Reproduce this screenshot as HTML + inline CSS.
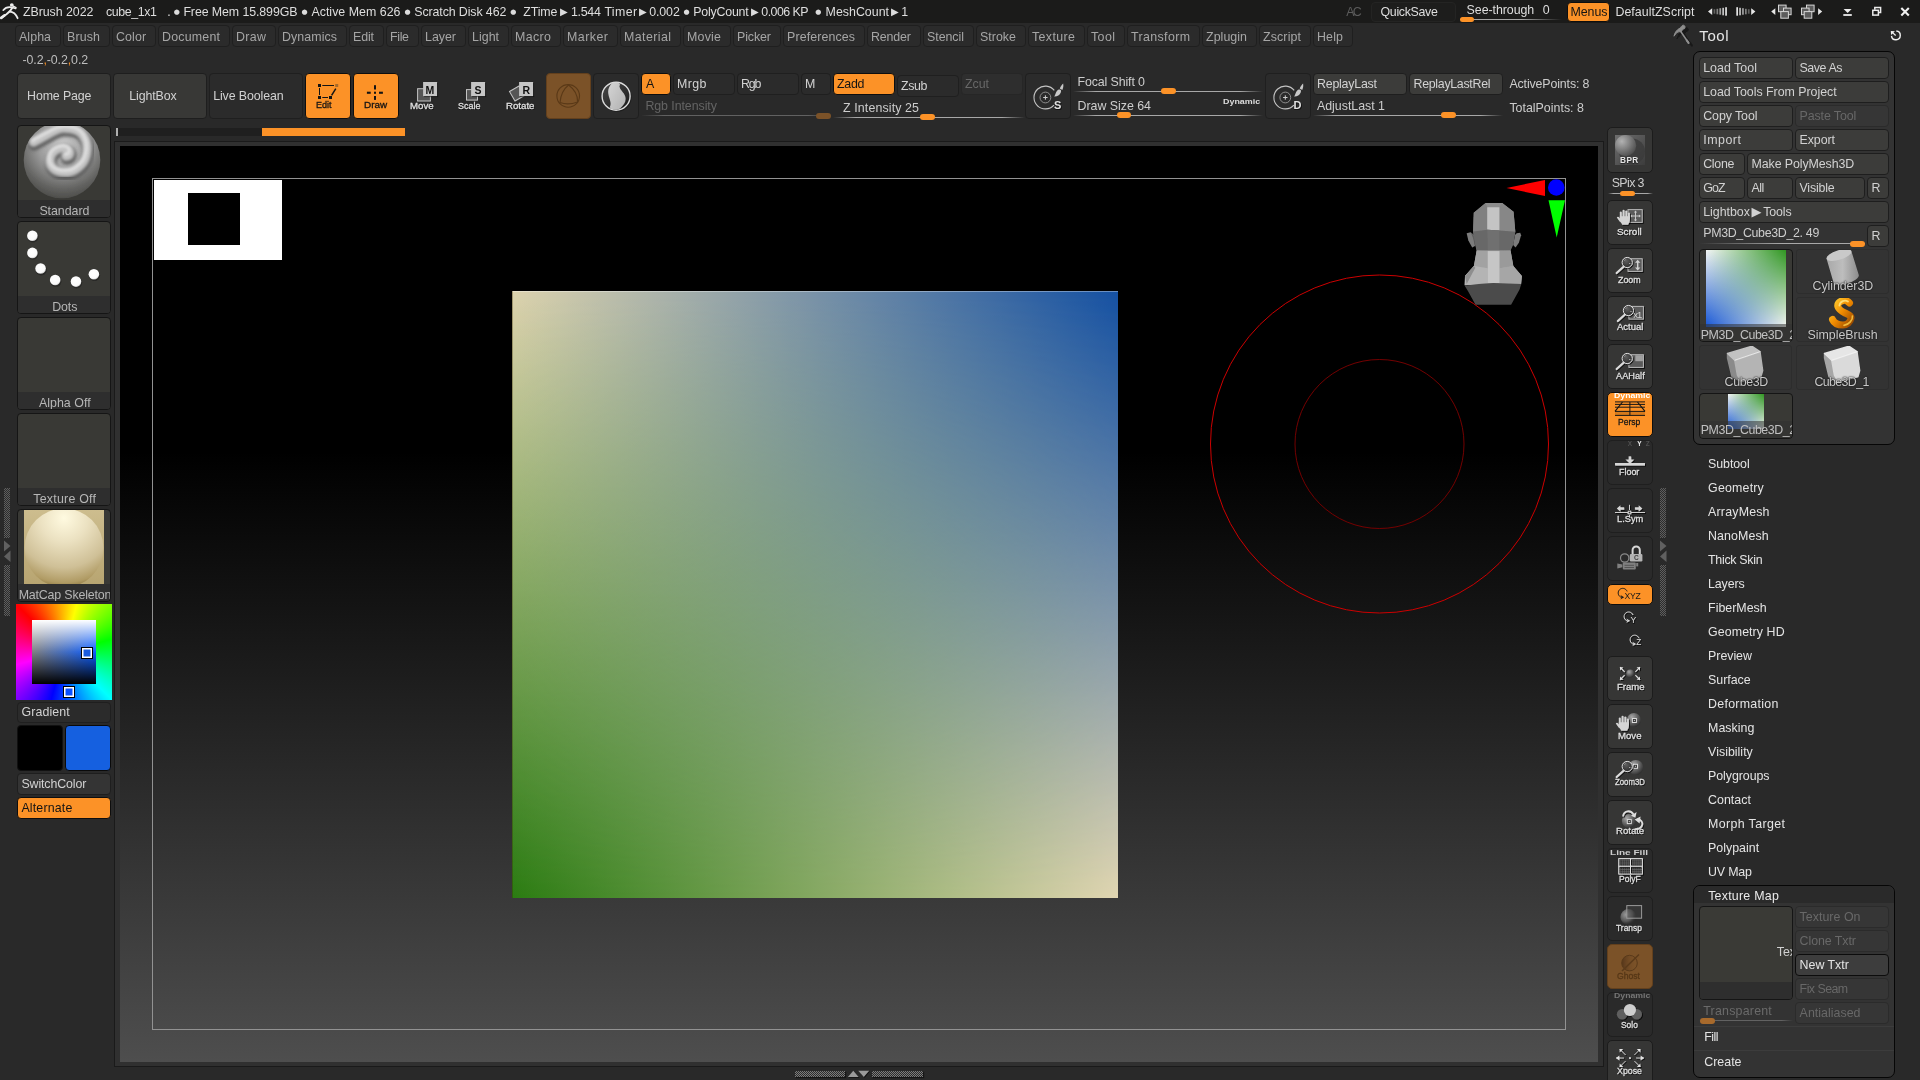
<!DOCTYPE html><html><head><meta charset="utf-8"><title>ZBrush 2022</title><style>
html,body{margin:0;padding:0;background:#292929;}
body{width:1920px;height:1080px;overflow:hidden;position:relative;font-family:'Liberation Sans', sans-serif;font-size:12.4px;color:#cdcdcd;}
#root{position:absolute;left:0;top:0;width:1920px;height:1080px;overflow:hidden;will-change:transform;}
.a{position:absolute;box-sizing:border-box;}
.t{white-space:pre;line-height:16px;height:16px;}
.btn{border:1px solid #1e1e1e;border-radius:4px;background:#3c3c3a;}
.flat{background:#2b2b2b;border-color:#1f1f1f;}
.on{background:#fc9227;border-color:#0e0e0e;}
.dis{background:#2e2e2e;border-color:#262626;}
.menu{background:#2b2b2b;border-color:#1f1f1f;}
.c-btn{color:#d2d2d2;} .c-on{color:#141414;} .c-dis{color:#686868;} .c-menu{color:#a6a6a6;}
.sl{height:1px;background:linear-gradient(to right,rgba(190,190,190,0),rgba(190,190,190,.85) 12%,rgba(190,190,190,.85) 88%,rgba(190,190,190,0));}
.kn{height:6px;border-radius:3px;background:#fc9227;}
svg{position:absolute;overflow:visible;}
.sym{font-family:'DejaVu Sans',sans-serif;}
.dots{background-image:conic-gradient(#5e5e5e 25%,#2c2c2c 0 50%,#5e5e5e 0 75%,#2c2c2c 0);background-size:2px 2px;}
.dots2{background-image:conic-gradient(#7c7c7c 25%,#2c2c2c 0 50%,#7c7c7c 0 75%,#2c2c2c 0);background-size:2px 2px;box-shadow:1px 1px 1px #151515;}
.thumb{border:1px solid #151515;border-radius:4px;background:#393935;overflow:hidden;}
.lbl{left:0;right:0;bottom:0;height:17px;background:#2e2e2e;}
.rb{border:1px solid #1c1c1c;border-radius:5px;background:#363635;}
.rbf{background:#2a2a2a;border-color:#1f1f1f;}
.panel{background:#333;border:1px solid #060606;border-radius:7px;}.cell{background:#333;border:1px solid #2d2d2d;border-radius:3px;overflow:hidden;}
.cl{color:#c8c8c8;text-shadow:0 0 2px #1a1a1a,0 0 1px #1a1a1a;}
.il{text-shadow:1px 1px 0 #141414,0 1px 0 #141414;}</style></head><body><div id="root"><div class="a " style="left:0px;top:0px;width:1920px;height:23px;background:#1b1b1a;"></div>
<div class="a t " style="left:22.9px;top:3.6px;letter-spacing:-0.045px;color:#dedede;">ZBrush 2022</div>
<div class="a t " style="left:106px;top:3.6px;letter-spacing:-0.393px;color:#dedede;">cube_1x1</div>
<div class="a t " style="left:167.3px;top:3.6px;color:#dedede;">.</div>
<div class="a t sym" style="left:173.7px;top:4.300000000000001px;font-size:7px;color:#dcdcdc;">&#9679;</div>
<div class="a t " style="left:183.4px;top:3.6px;letter-spacing:-0.100px;color:#dedede;">Free Mem 15.899GB</div>
<div class="a t sym" style="left:301.6px;top:4.300000000000001px;font-size:7px;color:#dcdcdc;">&#9679;</div>
<div class="a t " style="left:311.4px;top:3.6px;letter-spacing:0.020px;color:#dedede;">Active Mem 626</div>
<div class="a t sym" style="left:404.5px;top:4.300000000000001px;font-size:7px;color:#dcdcdc;">&#9679;</div>
<div class="a t " style="left:414.3px;top:3.6px;letter-spacing:-0.110px;color:#dedede;">Scratch Disk 462</div>
<div class="a t sym" style="left:510.2px;top:4.300000000000001px;font-size:7px;color:#dcdcdc;">&#9679;</div>
<div class="a t " style="left:523.2px;top:3.6px;letter-spacing:-0.114px;color:#dedede;">ZTime</div>
<div class="a t sym" style="left:560px;top:4px;font-size:10px;color:#dcdcdc;">&#9654;</div>
<div class="a t " style="left:570.9px;top:3.6px;letter-spacing:-0.279px;color:#dedede;">1.544</div>
<div class="a t " style="left:604.4px;top:3.6px;letter-spacing:0.374px;color:#dedede;">Timer</div>
<div class="a t sym" style="left:639px;top:4px;font-size:10px;color:#dcdcdc;">&#9654;</div>
<div class="a t " style="left:649.2px;top:3.6px;letter-spacing:-0.104px;color:#dedede;">0.002</div>
<div class="a t sym" style="left:683.5px;top:4.300000000000001px;font-size:7px;color:#dcdcdc;">&#9679;</div>
<div class="a t " style="left:693.2px;top:3.6px;letter-spacing:-0.209px;color:#dedede;">PolyCount</div>
<div class="a t sym" style="left:751.1px;top:4px;font-size:10px;color:#dcdcdc;">&#9654;</div>
<div class="a t " style="left:761.3px;top:3.6px;letter-spacing:-0.541px;color:#dedede;">0.006 KP</div>
<div class="a t sym" style="left:815.3px;top:4.300000000000001px;font-size:7px;color:#dcdcdc;">&#9679;</div>
<div class="a t " style="left:825.6px;top:3.6px;letter-spacing:0.003px;color:#dedede;">MeshCount</div>
<div class="a t sym" style="left:891px;top:4px;font-size:10px;color:#dcdcdc;">&#9654;</div>
<div class="a t " style="left:901.2px;top:3.6px;color:#dedede;">1</div>
<div class="a t " style="left:1346.2px;top:3.6px;letter-spacing:-1.719px;color:#5c5c5c;">AC</div>
<div class="a btn " style="left:1371px;top:2px;width:85px;height:20px;background:#1d1d1c;border-color:#242423;"></div>
<div class="a t " style="left:1380.5px;top:3.6px;letter-spacing:-0.315px;color:#dedede;">QuickSave</div>
<div class="a t " style="left:1466.6px;top:1.6px;letter-spacing:-0.060px;color:#dedede;">See-through</div>
<div class="a t " style="left:1542.7px;top:1.6px;color:#dedede;">0</div>
<div class="a sl" style="left:1460px;top:19px;width:102px;height:1px;background:linear-gradient(to right,rgba(190,190,190,.85) 0,rgba(190,190,190,.85) 60%,rgba(190,190,190,0));"></div>
<div class="a kn" style="left:1460px;top:17px;width:14px;height:5px;height:5px;"></div>
<div class="a btn on" style="left:1567px;top:2px;width:43px;height:20px;"></div>
<div class="a t c-on" style="left:1570.5px;top:3.6px;letter-spacing:-0.051px;">Menus</div>
<div class="a t " style="left:1615.4px;top:3.6px;letter-spacing:0.045px;color:#dedede;">DefaultZScript</div>
<div class="a btn menu" style="left:15px;top:25px;width:46px;height:22px;"></div>
<div class="a t c-menu" style="left:19px;top:28.7px;letter-spacing:0.074px;">Alpha</div>
<div class="a btn menu" style="left:63px;top:25px;width:47px;height:22px;"></div>
<div class="a t c-menu" style="left:67px;top:28.7px;letter-spacing:0.156px;">Brush</div>
<div class="a btn menu" style="left:112px;top:25px;width:44px;height:22px;"></div>
<div class="a t c-menu" style="left:116px;top:28.7px;letter-spacing:0.098px;">Color</div>
<div class="a btn menu" style="left:158px;top:25px;width:72px;height:22px;"></div>
<div class="a t c-menu" style="left:162px;top:28.7px;letter-spacing:0.217px;">Document</div>
<div class="a btn menu" style="left:232px;top:25px;width:44px;height:22px;"></div>
<div class="a t c-menu" style="left:236px;top:28.7px;letter-spacing:0.359px;">Draw</div>
<div class="a btn menu" style="left:278px;top:25px;width:69px;height:22px;"></div>
<div class="a t c-menu" style="left:282px;top:28.7px;letter-spacing:0.087px;">Dynamics</div>
<div class="a btn menu" style="left:349px;top:25px;width:35px;height:22px;"></div>
<div class="a t c-menu" style="left:353px;top:28.7px;letter-spacing:-0.120px;">Edit</div>
<div class="a btn menu" style="left:386px;top:25px;width:33px;height:22px;"></div>
<div class="a t c-menu" style="left:390px;top:28.7px;letter-spacing:-0.323px;">File</div>
<div class="a btn menu" style="left:421px;top:25px;width:45px;height:22px;"></div>
<div class="a t c-menu" style="left:425px;top:28.7px;letter-spacing:0.000px;">Layer</div>
<div class="a btn menu" style="left:468px;top:25px;width:41px;height:22px;"></div>
<div class="a t c-menu" style="left:472px;top:28.7px;letter-spacing:0.031px;">Light</div>
<div class="a btn menu" style="left:511px;top:25px;width:50px;height:22px;"></div>
<div class="a t c-menu" style="left:515px;top:28.7px;letter-spacing:0.391px;">Macro</div>
<div class="a btn menu" style="left:563px;top:25px;width:55px;height:22px;"></div>
<div class="a t c-menu" style="left:567px;top:28.7px;letter-spacing:0.487px;">Marker</div>
<div class="a btn menu" style="left:620px;top:25px;width:61px;height:22px;"></div>
<div class="a t c-menu" style="left:624px;top:28.7px;letter-spacing:0.417px;">Material</div>
<div class="a btn menu" style="left:683px;top:25px;width:48px;height:22px;"></div>
<div class="a t c-menu" style="left:687px;top:28.7px;letter-spacing:0.234px;">Movie</div>
<div class="a btn menu" style="left:733px;top:25px;width:48px;height:22px;"></div>
<div class="a t c-menu" style="left:737px;top:28.7px;letter-spacing:-0.087px;">Picker</div>
<div class="a btn menu" style="left:783px;top:25px;width:82px;height:22px;"></div>
<div class="a t c-menu" style="left:787px;top:28.7px;letter-spacing:0.119px;">Preferences</div>
<div class="a btn menu" style="left:867px;top:25px;width:54px;height:22px;"></div>
<div class="a t c-menu" style="left:871px;top:28.7px;letter-spacing:-0.128px;">Render</div>
<div class="a btn menu" style="left:923px;top:25px;width:51px;height:22px;"></div>
<div class="a t c-menu" style="left:927px;top:28.7px;letter-spacing:-0.034px;">Stencil</div>
<div class="a btn menu" style="left:976px;top:25px;width:50px;height:22px;"></div>
<div class="a t c-menu" style="left:980px;top:28.7px;letter-spacing:0.037px;">Stroke</div>
<div class="a btn menu" style="left:1028px;top:25px;width:57px;height:22px;"></div>
<div class="a t c-menu" style="left:1032px;top:28.7px;letter-spacing:0.393px;">Texture</div>
<div class="a btn menu" style="left:1087px;top:25px;width:38px;height:22px;"></div>
<div class="a t c-menu" style="left:1091px;top:28.7px;letter-spacing:0.422px;">Tool</div>
<div class="a btn menu" style="left:1127px;top:25px;width:73px;height:22px;"></div>
<div class="a t c-menu" style="left:1131px;top:28.7px;letter-spacing:0.375px;">Transform</div>
<div class="a btn menu" style="left:1202px;top:25px;width:55px;height:22px;"></div>
<div class="a t c-menu" style="left:1206px;top:28.7px;letter-spacing:0.060px;">Zplugin</div>
<div class="a btn menu" style="left:1259px;top:25px;width:52px;height:22px;"></div>
<div class="a t c-menu" style="left:1263px;top:28.7px;letter-spacing:0.135px;">Zscript</div>
<div class="a btn menu" style="left:1313px;top:25px;width:40px;height:22px;"></div>
<div class="a t c-menu" style="left:1317px;top:28.7px;letter-spacing:0.172px;">Help</div>
<div class="a t" style="left:22.5px;top:51.6px;color:#bdbdbd;letter-spacing:-0.1px;">-0.2<span style="color:#fc9227">,</span>-0.2<span style="color:#fc9227">,</span>0.2</div>
<div class="a btn " style="left:17px;top:73px;width:94px;height:46px;background:#383836;"></div>
<div class="a t c-btn" style="left:27.1px;top:88.1px;letter-spacing:-0.142px;">Home Page</div>
<div class="a btn " style="left:113px;top:73px;width:94px;height:46px;background:#383836;"></div>
<div class="a t c-btn" style="left:129.2px;top:88.1px;letter-spacing:-0.091px;">LightBox</div>
<div class="a btn flat" style="left:209px;top:73px;width:94px;height:46px;"></div>
<div class="a t c-btn" style="left:213.2px;top:88.1px;letter-spacing:-0.105px;">Live Boolean</div>
<div class="a btn on" style="left:305px;top:73px;width:46px;height:46px;"></div>
<div class="a btn on" style="left:353px;top:73px;width:46px;height:46px;"></div>
<div class="a btn " style="left:546px;top:73px;width:45px;height:46px;background:#7b5228;border-color:#63401d;"></div>
<div class="a btn flat" style="left:593px;top:73px;width:46px;height:46px;"></div>
<div class="a btn on" style="left:641px;top:73px;width:30px;height:22px;"></div>
<div class="a t c-on" style="left:646px;top:75.7px;">A</div>
<div class="a btn flat" style="left:673px;top:73px;width:62px;height:22px;"></div>
<div class="a t c-btn" style="left:677px;top:75.7px;letter-spacing:0.422px;">Mrgb</div>
<div class="a btn flat" style="left:737px;top:73px;width:62px;height:22px;"></div>
<div class="a t c-btn" style="left:741px;top:75.7px;letter-spacing:-1.117px;">Rgb</div>
<div class="a btn flat" style="left:801px;top:73px;width:30px;height:22px;"></div>
<div class="a t c-btn" style="left:805px;top:75.7px;">M</div>
<div class="a btn on" style="left:833px;top:73px;width:62px;height:22px;"></div>
<div class="a t c-on" style="left:837px;top:75.7px;letter-spacing:-0.250px;">Zadd</div>
<div class="a btn flat" style="left:897px;top:75px;width:62px;height:22px;"></div>
<div class="a t c-btn" style="left:901px;top:77.7px;letter-spacing:-0.349px;">Zsub</div>
<div class="a btn dis" style="left:961px;top:73px;width:62px;height:22px;"></div>
<div class="a t c-dis" style="left:965px;top:75.7px;letter-spacing:-0.036px;">Zcut</div>
<div class="a t " style="left:645.4px;top:97.6px;letter-spacing:-0.069px;color:#646464;">Rgb Intensity</div>
<div class="a sl" style="left:641px;top:115px;width:190px;height:1px;opacity:.45"></div>
<div class="a kn" style="left:816px;top:112.5px;width:15px;height:6px;background:#7b5228;"></div>
<div class="a t " style="left:843px;top:99.7px;letter-spacing:0.124px;">Z Intensity 25</div>
<div class="a sl" style="left:833px;top:117px;width:192px;height:1px;"></div>
<div class="a kn" style="left:920px;top:114.3px;width:14.5px;height:6px;"></div>
<div class="a btn flat" style="left:1025px;top:73px;width:46px;height:46px;"></div>
<div class="a t " style="left:1077.5px;top:73.5px;letter-spacing:-0.115px;">Focal Shift 0</div>
<div class="a sl" style="left:1073px;top:91px;width:190px;height:1px;"></div>
<div class="a kn" style="left:1161px;top:88.3px;width:14.5px;height:6px;"></div>
<div class="a t " style="left:1077.5px;top:97.6px;letter-spacing:-0.017px;">Draw Size 64</div>
<div class="a sl" style="left:1073px;top:115px;width:190px;height:1px;"></div>
<div class="a kn" style="left:1116.8px;top:112.3px;width:14.5px;height:6px;"></div>
<div class="a t " style="left:1223.2px;top:94.3px;font-size:7.8px;font-weight:bold;transform:scaleX(1.144);transform-origin:0 0;color:#dcdcdc;">Dynamic</div>
<div class="a btn flat" style="left:1265px;top:73px;width:46px;height:46px;"></div>
<div class="a btn " style="left:1313px;top:73px;width:94px;height:22px;"></div>
<div class="a t c-btn" style="left:1317px;top:75.7px;letter-spacing:-0.222px;">ReplayLast</div>
<div class="a btn " style="left:1409px;top:73px;width:94px;height:22px;"></div>
<div class="a t c-btn" style="left:1413.5px;top:75.7px;letter-spacing:-0.299px;">ReplayLastRel</div>
<div class="a t " style="left:1317px;top:97.6px;letter-spacing:-0.018px;">AdjustLast 1</div>
<div class="a sl" style="left:1313px;top:115px;width:190px;height:1px;"></div>
<div class="a kn" style="left:1440.7px;top:112.3px;width:14.9px;height:6px;"></div>
<div class="a t " style="left:1509.4px;top:75.7px;letter-spacing:-0.133px;">ActivePoints: 8</div>
<div class="a t " style="left:1509.4px;top:99.7px;letter-spacing:0.008px;">TotalPoints: 8</div>
<div class="a " style="left:116px;top:128px;width:146px;height:8px;background:#1f1f1f;"></div>
<div class="a " style="left:116px;top:128px;width:2px;height:8px;background:#b0b0b0;"></div>
<div class="a " style="left:262px;top:128px;width:143px;height:8px;background:#fc9227;"></div>
<div class="a " style="left:114px;top:141px;width:1490px;height:926px;background:#303030;border:1px solid #1a1a1a;"></div>
<div class="a " style="left:120px;top:146px;width:1478px;height:916px;background:linear-gradient(to bottom,#000 0%,#000 33.4%,#4e4e4e 100%);"></div>
<div class="a " style="left:152px;top:178px;width:1414px;height:852px;border:1px solid #929292;"></div>
<div class="a " style="left:154px;top:180px;width:128px;height:80px;background:#fff;"></div>
<div class="a " style="left:188px;top:193px;width:52px;height:52px;background:#000;"></div>
<svg style="left:512px;top:291px" width="606" height="607" viewBox="0 0 606 607">
<defs>
<linearGradient id="gT" x1="0" x2="1" y1="0" y2="0"><stop offset="0" stop-color="#ddd3ae"/><stop offset="1" stop-color="#1450a2"/></linearGradient>
<linearGradient id="gB" x1="0" x2="1" y1="0" y2="0"><stop offset="0" stop-color="#2b7c12"/><stop offset="1" stop-color="#e1d6b2"/></linearGradient>
<linearGradient id="gM" x1="0" x2="0" y1="0" y2="1"><stop offset="0" stop-color="#fff"/><stop offset="1" stop-color="#000"/></linearGradient>
<mask id="mk" maskUnits="userSpaceOnUse" x="0" y="0" width="606" height="607"><rect width="606" height="607" fill="url(#gM)"/></mask>
</defs>
<rect width="606" height="607" fill="url(#gB)"/>
<rect width="606" height="607" fill="url(#gT)" mask="url(#mk)"/>
<rect x="0" y="0" width="606" height="1" fill="#fff" opacity=".35"/>
<rect x="0" y="0" width="1" height="607" fill="#3a2a00" opacity=".35"/>
</svg>
<svg style="left:1200px;top:265px" width="360" height="360" viewBox="1200 265 360 360">
<circle cx="1379.5" cy="444" r="169" fill="none" stroke="#cc0000" stroke-width="1"/>
<circle cx="1379.5" cy="444" r="84.5" fill="none" stroke="#800000" stroke-width="0.9"/>
</svg>
<svg style="left:1500px;top:175px" width="70" height="70" viewBox="1500 175 70 70">
<polygon points="1506.5,188 1545,180 1545,196" fill="#ff0000"/>
<circle cx="1556.3" cy="187.5" r="8.3" fill="#0000ff"/>
<polygon points="1548.5,200.3 1565,200.3 1556.7,237.5" fill="#00ff00"/>
</svg>
<svg style="left:1450px;top:195px" width="90" height="120" viewBox="0 0 810 1080">
<defs><filter id="hb"><feGaussianBlur stdDeviation="3"/></filter></defs>
<g filter="url(#hb)">
<polygon points="150,345 185,335 215,360 225,460 200,472 165,410" fill="#7c7c7c"/>
<polygon points="600,345 632,340 640,362 620,430 590,472 568,450 585,360" fill="#7c7c7c"/>
<polygon points="185,335 215,360 225,460 205,380" fill="#5e5e5e"/>
<polygon points="320,72 470,72 572,150 588,330 545,500 240,500 208,330 214,160" fill="#848484"/>
<polygon points="214,160 320,72 335,110 335,312 208,328" fill="#808080"/>
<polygon points="470,72 572,150 588,330 445,320 445,110" fill="#878787"/>
<polygon points="320,72 470,72 445,110 335,110" fill="#8c8c8c"/>
<polygon points="335,110 445,110 445,320 335,312" fill="#c4c4c4"/>
<polygon points="208,328 335,312 445,320 588,330 572,440 545,500 445,505 340,505 240,500 224,440" fill="#686868"/>
<polygon points="335,312 445,320 445,505 340,505" fill="#6f6f6f"/>
<polygon points="240,500 545,500 570,640 647,730 640,802 130,812 135,730 215,640" fill="#a6a6a6"/>
<polygon points="240,500 340,505 340,660 215,640" fill="#a2a2a2"/>
<polygon points="215,640 340,660 340,792 135,812 135,730" fill="#b4b4b4"/>
<polygon points="135,730 215,640 228,655 150,800" fill="#8e8e8e"/>
<polygon points="445,505 545,500 570,640 445,660" fill="#9a9a9a"/>
<polygon points="445,660 570,640 647,730 640,802 445,792" fill="#a6a6a6"/>
<polygon points="340,505 445,505 445,792 340,792" fill="#c6c6c6"/>
<path d="M132,816 Q260,800 390,792 Q520,796 642,802 L625,852 L550,987 L230,987 L160,862 Z" fill="#4b4b4b"/>
</g></svg>
<div class="a dots" style="left:4px;top:488px;width:6px;height:50px;"></div>
<div class="a dots" style="left:4px;top:565px;width:6px;height:51px;"></div>
<svg style="left:4px;top:540px" width="7" height="23" viewBox="0 0 7 23"><polygon points="0,0.5 6.5,6 0,11.5" fill="#606060"/><polygon points="6.5,10.5 0,16.5 6.5,22" fill="#606060"/></svg>
<div class="a thumb" style="left:17px;top:125px;width:94px;height:93px;"><svg style="left:3.4px;top:-6px" width="82" height="82" viewBox="0 0 82 82">
<defs><radialGradient id="bs" cx="0.52" cy="0.3" r="0.72"><stop offset="0" stop-color="#c9c9c9"/><stop offset="0.45" stop-color="#9c9c9c"/><stop offset="0.8" stop-color="#646462"/><stop offset="1" stop-color="#4a4a47"/></radialGradient>
<filter id="bl3"><feGaussianBlur stdDeviation=".6"/></filter><filter id="bl1"><feGaussianBlur stdDeviation="1.6"/></filter><filter id="bl2"><feGaussianBlur stdDeviation="0.9"/></filter>
<clipPath id="bc"><circle cx="41" cy="40" r="38.5"/></clipPath></defs>
<circle cx="41" cy="40" r="38.3" fill="url(#bs)" filter="url(#bl3)"/>
<g clip-path="url(#bc)" fill="none" stroke-linecap="round">
<path d="M12.5 22 C16 20 21 17 26.6 14.2 C32 11 38 7.5 44 7.9 C51 8 58 10 61.3 14.2 C65 19 66.5 24 66 29.9 C65.5 36 64 40.5 60.5 44.1 C57 48 52.5 51.5 47.1 51.9 C42 52.3 36.5 52 32.9 48.8 C29.5 46 28.3 42 29 37.8 C29.6 34.5 31.5 31.7 34.5 29.9 C37.5 28 41 27 44 27.5 C47 28 49 30.5 48.7 33 C48.4 34.8 46.8 35.8 45 36" transform="translate(.8 2.6)" stroke="#5a5a5a" stroke-width="12" filter="url(#bl1)" opacity=".9"/>
<path d="M12.5 22 C16 20 21 17 26.6 14.2 C32 11 38 7.5 44 7.9 C51 8 58 10 61.3 14.2 C65 19 66.5 24 66 29.9 C65.5 36 64 40.5 60.5 44.1 C57 48 52.5 51.5 47.1 51.9 C42 52.3 36.5 52 32.9 48.8 C29.5 46 28.3 42 29 37.8 C29.6 34.5 31.5 31.7 34.5 29.9 C37.5 28 41 27 44 27.5 C47 28 49 30.5 48.7 33 C48.4 34.8 46.8 35.8 45 36" stroke="#c4c4c4" stroke-width="9.5" filter="url(#bl1)"/>
<path d="M12.5 22 C16 20 21 17 26.6 14.2 C32 11 38 7.5 44 7.9 C51 8 58 10 61.3 14.2 C65 19 66.5 24 66 29.9 C65.5 36 64 40.5 60.5 44.1 C57 48 52.5 51.5 47.1 51.9 C42 52.3 36.5 52 32.9 48.8 C29.5 46 28.3 42 29 37.8 C29.6 34.5 31.5 31.7 34.5 29.9 C37.5 28 41 27 44 27.5 C47 28 49 30.5 48.7 33 C48.4 34.8 46.8 35.8 45 36" transform="translate(-.5 -1.6)" stroke="#e6e6e6" stroke-width="3.4" filter="url(#bl2)" opacity=".7"/>
</g></svg><div class="a lbl"></div>
<div class="a t" style="left:21.4px;top:76.9px;color:#b6b6b6;letter-spacing:-0.042px;">Standard</div></div>
<div class="a thumb" style="left:17px;top:221px;width:94px;height:93px;"><svg style="left:-1px;top:-1px" width="94" height="76" viewBox="0 0 94 76"><defs><filter id="dsh"><feGaussianBlur stdDeviation=".7"/></filter><radialGradient id="dg" cx=".45" cy=".4" r=".6"><stop offset="0" stop-color="#fff"/><stop offset=".8" stop-color="#fafafa"/><stop offset="1" stop-color="#c8c8c8"/></radialGradient></defs><circle cx="16.0" cy="15.9" r="5.6" fill="#1a1a1a" opacity=".55" filter="url(#dsh)"/><circle cx="15.4" cy="14.7" r="5.3" fill="url(#dg)"/><circle cx="16.0" cy="33.1" r="5.6" fill="#1a1a1a" opacity=".55" filter="url(#dsh)"/><circle cx="15.4" cy="31.9" r="5.3" fill="url(#dg)"/><circle cx="24.2" cy="48.7" r="5.6" fill="#1a1a1a" opacity=".55" filter="url(#dsh)"/><circle cx="23.6" cy="47.5" r="5.3" fill="url(#dg)"/><circle cx="38.8" cy="60.2" r="5.6" fill="#1a1a1a" opacity=".55" filter="url(#dsh)"/><circle cx="38.2" cy="59.0" r="5.3" fill="url(#dg)"/><circle cx="59.6" cy="61.8" r="5.6" fill="#1a1a1a" opacity=".55" filter="url(#dsh)"/><circle cx="59.0" cy="60.6" r="5.3" fill="url(#dg)"/><circle cx="77.5" cy="54.5" r="5.6" fill="#1a1a1a" opacity=".55" filter="url(#dsh)"/><circle cx="76.9" cy="53.3" r="5.3" fill="url(#dg)"/></svg><div class="a lbl"></div>
<div class="a t" style="left:34.2px;top:76.89999999999998px;color:#b6b6b6;letter-spacing:-0.095px;">Dots</div></div>
<div class="a thumb" style="left:17px;top:317px;width:94px;height:93px;"><div class="a lbl"></div>
<div class="a t" style="left:20.9px;top:76.89999999999998px;color:#b6b6b6;letter-spacing:0.045px;">Alpha Off</div></div>
<div class="a thumb" style="left:17px;top:413px;width:94px;height:93px;"><div class="a lbl"></div>
<div class="a t" style="left:15.299999999999997px;top:76.89999999999998px;color:#b6b6b6;letter-spacing:0.223px;">Texture Off</div></div>
<div class="a thumb" style="left:17px;top:509px;width:94px;height:93px;"><svg style="left:6px;top:0px" width="80" height="77" viewBox="0 0 80 77">
<defs><linearGradient id="mb" x1="0" x2="0" y1="0" y2="1"><stop offset="0" stop-color="#cdbd8e"/><stop offset="1" stop-color="#b7a470"/></linearGradient>
<radialGradient id="ms" cx="0.5" cy="0.12" r="0.95"><stop offset="0" stop-color="#fffae0"/><stop offset="0.32" stop-color="#ebe1c1"/><stop offset="0.66" stop-color="#cfc097"/><stop offset="0.86" stop-color="#b09b64"/><stop offset="0.97" stop-color="#7f6933"/></radialGradient></defs>
<rect width="80" height="77" fill="url(#mb)"/><circle cx="40" cy="38" r="39.5" fill="url(#ms)"/></svg><div class="a lbl"></div>
<div class="a t" style="left:0.6999999999999993px;top:76.89999999999998px;color:#b6b6b6;letter-spacing:-0.169px;">MatCap Skeleton</div></div>
<div class="a " style="left:16px;top:604px;width:96px;height:96px;background:conic-gradient(from 315deg,#f00,#ff0,#0f0,#0ff,#00f,#f0f,#f00);"></div>
<div class="a " style="left:32px;top:620px;width:64px;height:64px;background:linear-gradient(to bottom,#fff 0%,rgba(255,255,255,0) 50%,rgba(0,0,0,0) 50%,#000 100%),linear-gradient(to right,#808080,#0a5cff);"></div>
<div class="a " style="left:81px;top:647px;width:12px;height:12px;background:#1a5ce0;border:1px solid #000;box-shadow:inset 0 0 0 1.5px #fff;"></div>
<div class="a " style="left:63px;top:686px;width:12px;height:12px;background:#0a50ff;border:1px solid #000;box-shadow:inset 0 0 0 1.5px #fff;"></div>
<div class="a btn flat" style="left:17px;top:702px;width:94px;height:21px;"></div>
<div class="a t c-btn" style="left:21.4px;top:703.9px;letter-spacing:0.124px;">Gradient</div>
<div class="a " style="left:17px;top:725px;width:46px;height:46px;background:#000;border:1px solid #111;border-radius:4px;"></div>
<div class="a " style="left:65px;top:725px;width:46px;height:46px;background:#1560e0;border:1px solid #0a0a0a;border-radius:4px;"></div>
<div class="a btn " style="left:17px;top:773px;width:94px;height:22px;background:#343434;"></div>
<div class="a t c-btn" style="left:21.4px;top:775.9px;letter-spacing:-0.111px;">SwitchColor</div>
<div class="a btn on" style="left:17px;top:797px;width:94px;height:22px;"></div>
<div class="a t c-on" style="left:21.4px;top:799.8px;letter-spacing:0.163px;">Alternate</div>
<div class="a rb " style="left:1607px;top:127px;width:46px;height:46px;"></div>
<div class="a t " style="left:1611.7px;top:175.2px;letter-spacing:-0.603px;">SPix 3</div>
<div class="a sl" style="left:1608px;top:193px;width:45px;height:1px;"></div>
<div class="a kn" style="left:1620px;top:190.8px;width:14.5px;height:5.5px;"></div>
<div class="a rb " style="left:1607px;top:200px;width:46px;height:45px;"></div>
<div class="a rb " style="left:1607px;top:248px;width:46px;height:45px;"></div>
<div class="a rb " style="left:1607px;top:296px;width:46px;height:45px;"></div>
<div class="a rb " style="left:1607px;top:344px;width:46px;height:45px;"></div>
<div class="a rb " style="left:1607px;top:392px;width:46px;height:45px;background:#fc9227;border-color:#0e0e0e;"></div>
<div class="a rb rbf" style="left:1607px;top:440px;width:46px;height:45px;"></div>
<div class="a rb rbf" style="left:1607px;top:488px;width:46px;height:45px;"></div>
<div class="a rb rbf" style="left:1607px;top:536px;width:46px;height:45px;"></div>
<div class="a rb " style="left:1607px;top:584px;width:46px;height:21px;background:#fc9227;border-color:#0e0e0e;"></div>
<div class="a rb " style="left:1607px;top:656px;width:46px;height:45px;"></div>
<div class="a rb " style="left:1607px;top:704px;width:46px;height:45px;"></div>
<div class="a rb " style="left:1607px;top:752px;width:46px;height:45px;"></div>
<div class="a rb " style="left:1607px;top:800px;width:46px;height:45px;"></div>
<div class="a rb rbf" style="left:1607px;top:848px;width:46px;height:45px;"></div>
<div class="a rb rbf" style="left:1607px;top:896px;width:46px;height:45px;"></div>
<div class="a rb " style="left:1607px;top:944px;width:46px;height:45px;background:#7b5228;border-color:#63401d;"></div>
<div class="a rb rbf" style="left:1607px;top:992px;width:46px;height:45px;"></div>
<div class="a rb " style="left:1607px;top:1040px;width:46px;height:50px;"></div>
<div class="a dots" style="left:1660px;top:488px;width:6px;height:50px;"></div>
<div class="a dots" style="left:1660px;top:565px;width:6px;height:51px;"></div>
<svg style="left:1660px;top:540px" width="7" height="23" viewBox="0 0 7 23"><polygon points="0,0.5 6.5,6 0,11.5" fill="#606060"/><polygon points="6.5,10.5 0,16.5 6.5,22" fill="#606060"/></svg>
<div class="a dots2" style="left:795px;top:1071px;width:50px;height:6px;"></div>
<div class="a dots2" style="left:872px;top:1071px;width:51px;height:6px;"></div>
<svg style="left:847px;top:1070px" width="23" height="8" viewBox="0 0 23 8"><g transform="translate(.8 .8)" fill="#111"><polygon points="0.9,7 6.3,0.8 11.7,7"/><polygon points="11.3,0.8 16.8,7 22.2,0.8"/></g><polygon points="0.9,7 6.3,0.8 11.7,7" fill="#9a9a9a"/><polygon points="11.3,0.8 16.8,7 22.2,0.8" fill="#9a9a9a"/></svg>
<svg style="left:1670px;top:22px" width="26" height="26" viewBox="1670 22 26 26"><g transform="translate(3.2 2.4)" fill="#161616" stroke="#161616" opacity=".85" filter="url(#hmb)"><path d="M1674 36.2 C1674.5 32.5 1677 29.5 1680.5 27.8 C1681.5 26 1682.5 25 1683.6 25.2 C1685 25.6 1685.4 27.2 1684.6 28.6 L1682.8 29.2 L1681.2 31.8 C1678.6 31 1676 33 1674 36.2 Z"/><path d="M1680.4 31 L1688.6 43" fill="none" stroke-width="1.5" stroke-linecap="round"/><path d="M1686.8 40.4 L1688.6 43" fill="none" stroke-width="2.1" stroke-linecap="round"/></g><defs><filter id="hmb"><feGaussianBlur stdDeviation=".5"/></filter></defs><g fill="#8e8e8e" stroke="#8e8e8e"><path d="M1674 36.2 C1674.5 32.5 1677 29.5 1680.5 27.8 C1681.5 26 1682.5 25 1683.6 25.2 C1685 25.6 1685.4 27.2 1684.6 28.6 L1682.8 29.2 L1681.2 31.8 C1678.6 31 1676 33 1674 36.2 Z"/><path d="M1680.4 31 L1688.6 43" fill="none" stroke-width="1.5" stroke-linecap="round"/><path d="M1686.8 40.4 L1688.6 43" fill="none" stroke-width="2.1" stroke-linecap="round"/></g></svg>
<div class="a t " style="left:1699.3px;top:27.5px;font-size:15px;letter-spacing:0.590px;color:#e6e6e6;line-height:20px;height:20px;margin-top:-2px;">Tool</div>
<svg style="left:1886px;top:26px" width="18" height="18" viewBox="1886 26 18 18"><path d="M1896.3 31 A4.4 4.4 0 1 1 1891.5 35.9" fill="none" stroke="#f2f2f2" stroke-width="1.4"/><path d="M1895.7 35.5 L1892.6 32.6" stroke="#f2f2f2" stroke-width="1.3"/><polygon points="1890.8,30.9 1894.9,31.2 1891.1,34.9" fill="#f2f2f2"/></svg>
<div class="a panel" style="left:1693px;top:51px;width:202px;height:394px;"></div>
<div class="a btn " style="left:1699px;top:57px;width:94px;height:22px;"></div>
<div class="a t c-btn" style="left:1703.2px;top:59.5px;letter-spacing:0.023px;">Load Tool</div>
<div class="a btn " style="left:1795px;top:57px;width:94px;height:22px;"></div>
<div class="a t c-btn" style="left:1799.5px;top:59.5px;letter-spacing:-0.411px;">Save As</div>
<div class="a btn " style="left:1699px;top:81px;width:190px;height:22px;"></div>
<div class="a t c-btn" style="left:1703.2px;top:83.5px;letter-spacing:-0.026px;">Load Tools From Project</div>
<div class="a btn " style="left:1699px;top:105px;width:94px;height:22px;"></div>
<div class="a t c-btn" style="left:1703.2px;top:107.5px;letter-spacing:-0.072px;">Copy Tool</div>
<div class="a btn dis" style="left:1795px;top:105px;width:94px;height:22px;background:#363636;border-color:#2b2b2b;"></div>
<div class="a t c-dis" style="left:1799.5px;top:107.5px;letter-spacing:-0.093px;">Paste Tool</div>
<div class="a btn " style="left:1699px;top:129px;width:94px;height:22px;"></div>
<div class="a t c-btn" style="left:1703.2px;top:131.5px;letter-spacing:0.515px;">Import</div>
<div class="a btn " style="left:1795px;top:129px;width:94px;height:22px;"></div>
<div class="a t c-btn" style="left:1799.5px;top:131.5px;letter-spacing:-0.062px;">Export</div>
<div class="a btn " style="left:1699px;top:153px;width:46px;height:22px;"></div>
<div class="a t c-btn" style="left:1703.2px;top:155.5px;letter-spacing:-0.269px;">Clone</div>
<div class="a btn " style="left:1747px;top:153px;width:142px;height:22px;"></div>
<div class="a t c-btn" style="left:1751.6px;top:155.5px;letter-spacing:-0.099px;">Make PolyMesh3D</div>
<div class="a btn " style="left:1699px;top:177px;width:46px;height:22px;"></div>
<div class="a t c-btn" style="left:1703.2px;top:179.5px;letter-spacing:-0.855px;">GoZ</div>
<div class="a btn " style="left:1747px;top:177px;width:46px;height:22px;"></div>
<div class="a t c-btn" style="left:1751.6px;top:179.5px;letter-spacing:-0.541px;">All</div>
<div class="a btn " style="left:1795px;top:177px;width:70px;height:22px;"></div>
<div class="a t c-btn" style="left:1799.5px;top:179.5px;letter-spacing:-0.197px;">Visible</div>
<div class="a btn " style="left:1867px;top:177px;width:22px;height:22px;"></div>
<div class="a t c-btn" style="left:1871.5px;top:179.5px;">R</div>
<div class="a btn " style="left:1699px;top:201px;width:190px;height:22px;"></div>
<div class="a t c-btn" style="left:1703.2px;top:203.5px;letter-spacing:-0.023px;">Lightbox</div>
<div class="a t sym" style="left:1751.4px;top:203.6px;font-size:13px;color:#d2d2d2;">&#9654;</div>
<div class="a t c-btn" style="left:1763.3px;top:203.5px;letter-spacing:-0.159px;">Tools</div>
<div class="a t " style="left:1703.2px;top:225.3px;letter-spacing:-0.321px;">PM3D_Cube3D_2. 49</div>
<div class="a sl" style="left:1699px;top:243px;width:166px;height:1px;background:linear-gradient(to right,rgba(190,190,190,0),rgba(190,190,190,.85) 50%,rgba(190,190,190,.85));"></div>
<div class="a kn" style="left:1850px;top:240.8px;width:14.5px;height:6px;"></div>
<div class="a btn " style="left:1867px;top:225px;width:22px;height:22px;"></div>
<div class="a t c-btn" style="left:1871.5px;top:227.5px;">R</div>
<div class="a thumb" style="left:1699px;top:249px;width:94px;height:93px;"><svg style="left:6px;top:0" width="80" height="77" viewBox="0 0 80 77"><defs>
<linearGradient id="pT" x1="0" x2="1" y1="0" y2="0"><stop offset="0" stop-color="#f4f6f4"/><stop offset="1" stop-color="#2f9620"/></linearGradient>
<linearGradient id="pB" x1="0" x2="1" y1="0" y2="0"><stop offset="0" stop-color="#1656d6"/><stop offset="1" stop-color="#f4f6f2"/></linearGradient>
<linearGradient id="pM" x1="0" x2="0" y1="0" y2="1"><stop offset="0" stop-color="#fff"/><stop offset="1" stop-color="#000"/></linearGradient>
<mask id="pmk" maskUnits="userSpaceOnUse" x="0" y="0" width="80" height="77"><rect width="80" height="77" fill="url(#pM)"/></mask></defs>
<rect width="80" height="77" fill="url(#pB)"/><rect width="80" height="77" fill="url(#pT)" mask="url(#pmk)"/></svg><div class="a" style="left:0;right:0;bottom:0;height:17px;background:rgba(50,50,48,.55);"></div></div>
<div class="a" style="left:1700px;top:322px;width:92px;height:20.5px;overflow:hidden;"><div class="a t" style="left:0.7px;top:4.5px;color:#c0c0c0;letter-spacing:-0.422px;">PM3D_Cube3D_2</div></div>
<div class="a cell" style="left:1796px;top:249px;width:93px;height:45px;"><svg style="left:28px;top:-1px" width="36" height="38" viewBox="0 0 36 38"><defs><linearGradient id="cy" x1="0" x2="1"><stop offset="0" stop-color="#a8a8a8"/><stop offset=".5" stop-color="#bdbdbd"/><stop offset="1" stop-color="#8c8c8c"/></linearGradient></defs>
<path d="M1.5 9.5 L8.5 33.5 A13 4.8 -17 0 0 33.8 26 L26.5 2.5 Z" fill="url(#cy)"/><ellipse cx="14" cy="6" rx="13" ry="4.8" transform="rotate(-17 14 6)" fill="#c9c9c9"/></svg><div class="a t cl" style="left:15.5px;top:28.30000000000001px;letter-spacing:-0.066px;">Cylinder3D</div></div>
<div class="a cell" style="left:1796px;top:297px;width:93px;height:45px;"><svg style="left:32px;top:0px" width="30" height="32" viewBox="0 0 30 32"><defs><linearGradient id="sg" x1="0" x2="1" y1="0" y2="1"><stop offset="0" stop-color="#ffcf30"/><stop offset=".5" stop-color="#f08a00"/><stop offset="1" stop-color="#9a4a00"/></linearGradient></defs>
<path d="M20.5 5 C18 2.5 15.5 2 14 2.5 C10 3.5 8 6 9 9 C10 12 13 13.5 16 15 C19 16.5 22.5 17.5 22 20 C21.5 24 18 27 14 27 C9 27 5 25 3.5 21.5" fill="none" stroke="url(#sg)" stroke-width="7" stroke-linecap="round"/>
<path d="M19 3.6 C16 1.6 11 3 10.4 7.5" fill="none" stroke="#ffe88a" stroke-width="1.8" stroke-linecap="round" opacity=".85"/><path d="M23.4 18 C24 22 20 26.5 15 27.4" fill="none" stroke="#ffd24a" stroke-width="1.6" stroke-linecap="round" opacity=".8"/></svg><div class="a t cl" style="left:10.599999999999909px;top:28.5px;letter-spacing:-0.025px;">SimpleBrush</div></div>
<div class="a cell" style="left:1699px;top:345px;width:93px;height:45px;"><svg style="left:27px;top:-1px" width="38" height="40" viewBox="0 0 38 40"><g stroke-linejoin="round" stroke-width="1.6">
<polygon points="0.6,8.5 7.8,15.2 10.5,30 14.1,36.3 5.1,31.8 0.6,13" fill="#8a8a8a" stroke="#8a8a8a"/>
<polygon points="7.8,15.2 32.9,6.7 35.6,25.5 33.8,31.8 14.1,36.3 10.5,30" fill="#b4b4b4" stroke="#b4b4b4"/>
<polygon points="0.6,8.5 24.9,1.3 32.9,6.7 7.8,15.2" fill="#c2c2c2" stroke="#c2c2c2"/></g>
<path d="M7.8 15.2 L32.9 6.7" stroke="#f6f6f6" stroke-width="1" opacity=".7"/></svg><div class="a t cl" style="left:24.59999999999991px;top:27.899999999999977px;letter-spacing:-0.374px;">Cube3D</div></div>
<div class="a cell" style="left:1796px;top:345px;width:93px;height:45px;"><svg style="left:27px;top:-1px" width="38" height="40" viewBox="0 0 38 40"><g stroke-linejoin="round" stroke-width="1.6">
<polygon points="0.6,8.5 7.8,15.2 10.5,30 14.1,36.3 5.1,31.8 0.6,13" fill="#a6a6a6" stroke="#a6a6a6"/>
<polygon points="7.8,15.2 32.9,6.7 35.6,25.5 33.8,31.8 14.1,36.3 10.5,30" fill="#dadada" stroke="#dadada"/>
<polygon points="0.6,8.5 24.9,1.3 32.9,6.7 7.8,15.2" fill="#e6e6e6" stroke="#e6e6e6"/></g>
<path d="M7.8 15.2 L32.9 6.7" stroke="#f6f6f6" stroke-width="1" opacity=".7"/></svg><div class="a t cl" style="left:17.40000000000009px;top:27.899999999999977px;letter-spacing:-0.621px;">Cube3D_1</div></div>
<div class="a thumb" style="left:1699px;top:393px;width:94px;height:46px;"><svg style="left:28px;top:0" width="36" height="35" preserveAspectRatio="none" viewBox="0 0 80 77"><defs>
<linearGradient id="qT" x1="0" x2="1" y1="0" y2="0"><stop offset="0" stop-color="#f4f6f4"/><stop offset="1" stop-color="#2f9620"/></linearGradient>
<linearGradient id="qB" x1="0" x2="1" y1="0" y2="0"><stop offset="0" stop-color="#1656d6"/><stop offset="1" stop-color="#f4f6f2"/></linearGradient>
<linearGradient id="qM" x1="0" x2="0" y1="0" y2="1"><stop offset="0" stop-color="#fff"/><stop offset="1" stop-color="#000"/></linearGradient>
<mask id="qmk" maskUnits="userSpaceOnUse" x="0" y="0" width="80" height="77"><rect width="80" height="77" fill="url(#qM)"/></mask></defs>
<rect width="80" height="77" fill="url(#qB)"/><rect width="80" height="77" fill="url(#qT)" mask="url(#qmk)"/></svg><div class="a" style="left:0;right:0;bottom:0;height:17px;background:rgba(50,50,48,.55);"></div><div class="a t" style="left:0.7px;top:28.100000000000023px;color:#c0c0c0;letter-spacing:-0.422px;">PM3D_Cube3D_2</div></div>
<div class="a t " style="left:1708.1px;top:455.5px;letter-spacing:-0.072px;color:#e4e4e4;">Subtool</div>
<div class="a t " style="left:1708.1px;top:479.5px;letter-spacing:0.185px;color:#e4e4e4;">Geometry</div>
<div class="a t " style="left:1708.1px;top:503.5px;letter-spacing:0.187px;color:#e4e4e4;">ArrayMesh</div>
<div class="a t " style="left:1708.1px;top:527.5px;letter-spacing:0.083px;color:#e4e4e4;">NanoMesh</div>
<div class="a t " style="left:1708.1px;top:551.5px;letter-spacing:-0.295px;color:#e4e4e4;">Thick Skin</div>
<div class="a t " style="left:1708.1px;top:575.5px;letter-spacing:-0.141px;color:#e4e4e4;">Layers</div>
<div class="a t " style="left:1708.1px;top:599.5px;letter-spacing:0.009px;color:#e4e4e4;">FiberMesh</div>
<div class="a t " style="left:1708.1px;top:623.5px;letter-spacing:0.075px;color:#e4e4e4;">Geometry HD</div>
<div class="a t " style="left:1708.1px;top:647.5px;letter-spacing:-0.046px;color:#e4e4e4;">Preview</div>
<div class="a t " style="left:1708.1px;top:671.5px;letter-spacing:-0.034px;color:#e4e4e4;">Surface</div>
<div class="a t " style="left:1708.1px;top:695.5px;letter-spacing:0.270px;color:#e4e4e4;">Deformation</div>
<div class="a t " style="left:1708.1px;top:719.5px;letter-spacing:0.027px;color:#e4e4e4;">Masking</div>
<div class="a t " style="left:1708.1px;top:743.5px;letter-spacing:0.019px;color:#e4e4e4;">Visibility</div>
<div class="a t " style="left:1708.1px;top:767.5px;letter-spacing:-0.067px;color:#e4e4e4;">Polygroups</div>
<div class="a t " style="left:1708.1px;top:791.5px;letter-spacing:0.016px;color:#e4e4e4;">Contact</div>
<div class="a t " style="left:1708.1px;top:815.5px;letter-spacing:0.365px;color:#e4e4e4;">Morph Target</div>
<div class="a t " style="left:1708.1px;top:839.5px;letter-spacing:0.002px;color:#e4e4e4;">Polypaint</div>
<div class="a t " style="left:1708.1px;top:863.5px;letter-spacing:-0.193px;color:#e4e4e4;">UV Map</div>
<div class="a panel" style="left:1693px;top:885px;width:202px;height:193px;"></div>
<div class="a " style="left:1694px;top:886px;width:200px;height:17px;background:#2a2a2a;border-radius:7px 7px 0 0;"></div>
<div class="a t " style="left:1708.2px;top:887.8px;letter-spacing:0.241px;color:#eaeaea;">Texture Map</div>
<div class="a thumb" style="left:1699px;top:906px;width:94px;height:94px;background:#3a3a36;"><div class="a" style="left:0;right:0;bottom:0;height:17px;background:#2e2e2e;"></div><div class="a t" style="left:76.7px;top:37.200000000000045px;color:#d0d0d0;">Tex</div></div>
<div class="a btn dis" style="left:1795px;top:906px;width:94px;height:22px;background:#363636;border-color:#2b2b2b;"></div>
<div class="a t c-dis" style="left:1799.6px;top:908.7px;letter-spacing:0.032px;">Texture On</div>
<div class="a btn dis" style="left:1795px;top:930px;width:94px;height:22px;background:#363636;border-color:#2b2b2b;"></div>
<div class="a t c-dis" style="left:1799.6px;top:932.7px;letter-spacing:-0.060px;">Clone Txtr</div>
<div class="a btn " style="left:1795px;top:954px;width:94px;height:22px;background:#3d3d3d;border-color:#0c0c0c;"></div>
<div class="a t c-btn" style="left:1799.6px;top:956.5px;letter-spacing:-0.021px;color:#e4e4e4;">New Txtr</div>
<div class="a btn dis" style="left:1795px;top:978px;width:94px;height:22px;background:#363636;border-color:#2b2b2b;"></div>
<div class="a t c-dis" style="left:1799.6px;top:980.7px;letter-spacing:-0.533px;">Fix Seam</div>
<div class="a btn dis" style="left:1795px;top:1002px;width:94px;height:22px;background:#363636;border-color:#2b2b2b;"></div>
<div class="a t c-dis" style="left:1799.6px;top:1004.7px;letter-spacing:0.027px;">Antialiased</div>
<div class="a t " style="left:1703.3px;top:1002.6px;letter-spacing:0.214px;color:#6a6a6a;">Transparent</div>
<div class="a sl" style="left:1699px;top:1020px;width:94px;height:1px;opacity:.4;"></div>
<div class="a kn" style="left:1700px;top:1017.8px;width:15px;height:6px;background:#a86a2c;"></div>
<div class="a " style="left:1694px;top:1026px;width:200px;height:1px;background:#3c3c3c;"></div>
<div class="a " style="left:1694px;top:1050px;width:200px;height:1px;background:#3c3c3c;"></div>
<div class="a t " style="left:1704.3px;top:1029.4px;letter-spacing:-0.543px;color:#e4e4e4;">Fill</div>
<div class="a t " style="left:1704.3px;top:1053.7px;letter-spacing:-0.001px;color:#e4e4e4;">Create</div>
<svg style="left:0px;top:0px" width="22" height="22" viewBox="0 0 22 22" ><g fill="none" stroke="#ececec" stroke-linecap="round" stroke-linejoin="round">
<path d="M3.2 10.2 C5.5 7.2 8.5 6.6 12.2 7.4 L15.6 8.4" stroke-width="1.6"/>
<path d="M12.4 7.6 C11 10.5 9.5 12 6.5 14.2 L1.6 17.6" stroke-width="2"/>
<path d="M1.2 17.9 L4.6 15.3" stroke-width="2.6"/>
<path d="M9.6 11.6 C12.5 11.6 15.5 13 17.6 18.2" stroke-width="1.8"/>
<path d="M13.2 6.2 L16 7.6" stroke-width="1.5"/></g>
<ellipse cx="11.8" cy="4.9" rx="1.9" ry="1.7" fill="#ececec"/></svg>
<svg style="left:1700px;top:0px" width="220" height="23" viewBox="1700 0 220 23" >
<polygon points="1708,11.6 1712.2,8.2 1712.2,15" fill="#e6e6e6"/><rect x="1713.6" y="9.2" width="1.7" height="4.5" fill="#e6e6e6" opacity="0.35"/><rect x="1716.5" y="8.8" width="1.7" height="5.5" fill="#e6e6e6" opacity="0.51"/><rect x="1719.4" y="8.2" width="1.7" height="6.5" fill="#e6e6e6" opacity="0.67"/><rect x="1722.3" y="7.8" width="1.7" height="7.5" fill="#e6e6e6" opacity="0.83"/><rect x="1725.2" y="7.2" width="1.7" height="8.5" fill="#e6e6e6" opacity="0.99"/>
<rect x="1736.3" y="7.2" width="1.7" height="8.5" fill="#e6e6e6" opacity="0.99"/><rect x="1739.2" y="7.8" width="1.7" height="7.5" fill="#e6e6e6" opacity="0.83"/><rect x="1742.1" y="8.2" width="1.7" height="6.5" fill="#e6e6e6" opacity="0.67"/><rect x="1745.0" y="8.8" width="1.7" height="5.5" fill="#e6e6e6" opacity="0.51"/><rect x="1747.9" y="9.2" width="1.7" height="4.5" fill="#e6e6e6" opacity="0.35"/><polygon points="1755.4,11.6 1751.2,8.2 1751.2,15" fill="#e6e6e6"/>
<polygon points="1771.2,11.6 1775.3,8.2 1775.3,15" fill="#e6e6e6"/><rect x="1778.5" y="5.1" width="7.6" height="6.6" fill="#5c5c5c" stroke="#d6d6d6" stroke-width="1"/><rect x="1783.5" y="8.1" width="7.6" height="6.6" fill="#5c5c5c" stroke="#d6d6d6" stroke-width="1"/><rect x="1780.8" y="11.6" width="7.6" height="6.6" fill="#5c5c5c" stroke="#d6d6d6" stroke-width="1"/>
<rect x="1806.5" y="5.1" width="7.6" height="6.6" fill="#5c5c5c" stroke="#d6d6d6" stroke-width="1"/><rect x="1801.5" y="8.1" width="7.6" height="6.6" fill="#5c5c5c" stroke="#d6d6d6" stroke-width="1"/><rect x="1804.2" y="11.6" width="7.6" height="6.6" fill="#5c5c5c" stroke="#d6d6d6" stroke-width="1"/><polygon points="1822.2,11.6 1818.1,8.2 1818.1,15" fill="#e6e6e6"/>
<polygon points="1843.6,9 1851.6,9 1847.6,13" fill="#ececec"/><rect x="1843.3" y="14.1" width="8.5" height="1.8" fill="#ececec"/>
<path d="M1874.8 9.8 V7.6 H1880.6 V12.6 H1878.6" fill="none" stroke="#ececec" stroke-width="1.5"/><rect x="1872.8" y="10.3" width="5.6" height="4.8" fill="none" stroke="#ececec" stroke-width="1.5"/>
<path d="M1901.3 8 L1908.8 15.4 M1908.8 8 L1901.3 15.4" stroke="#f0f0f0" stroke-width="2.1"/></svg>
<svg style="left:305px;top:73px" width="46" height="46" viewBox="305 73 46 46" ><g fill="#141414"><rect x="318" y="84" width="3" height="3"/><rect x="318" y="96" width="3" height="3"/><rect x="329" y="96" width="3" height="3"/><rect x="335.2" y="84" width="3" height="3" fill="#a86a28"/></g>
<g stroke="#141414" fill="none"><path d="M322.3 85.5 H334" stroke-width="1"/><path d="M319.5 88 V95" stroke-width="1"/><path d="M322.3 97.5 H328" stroke-width="1"/><path d="M335.8 88.6 L331.6 95.4" stroke-width="1.5"/></g></svg>
<div class="a t " style="left:315.7px;top:97.44px;font-size:9.4px;transform:scaleX(0.966);transform-origin:0 0;color:#141414;-webkit-text-stroke:.3px #141414;">Edit</div>
<svg style="left:353px;top:73px" width="46" height="46" viewBox="353 73 46 46" ><g fill="#141414"><rect x="374" y="85.2" width="2" height="4.3"/><rect x="374" y="91.7" width="2" height="2.1"/><rect x="374" y="96" width="2" height="3.9"/><rect x="366.9" y="91.7" width="3.8" height="2.1"/><rect x="379" y="91.7" width="3.9" height="2.1"/></g></svg>
<div class="a t " style="left:363.9px;top:97.44px;font-size:9.4px;transform:scaleX(1.055);transform-origin:0 0;color:#141414;-webkit-text-stroke:.3px #141414;">Draw</div>
<svg style="left:405px;top:75px" width="135" height="40" viewBox="405 75 135 40" ><rect x="417.6" y="88.7" width="12.8" height="12.3" fill="#555" stroke="#c4c4c4" stroke-width="1"/><rect x="423.1" y="82" width="14" height="14.1" fill="#c6c6c6"/><rect x="437.1" y="83" width="1" height="14" fill="#111" opacity=".6"/><rect x="424.1" y="96.1" width="14" height="1" fill="#111" opacity=".6"/><rect x="466.5" y="89.6" width="11" height="10.5" fill="#555" stroke="#c4c4c4" stroke-width="1"/><rect x="471.1" y="82" width="14" height="14.1" fill="#c6c6c6"/><rect x="485.1" y="83" width="1" height="14" fill="#111" opacity=".6"/><rect x="472.1" y="96.1" width="14" height="1" fill="#111" opacity=".6"/><rect x="511.5" y="88" width="11" height="11" fill="#555" stroke="#c4c4c4" stroke-width="1" transform="rotate(-30 517 93.5)"/><rect x="519.1" y="82" width="14" height="14.1" fill="#c6c6c6"/><rect x="533.1" y="83" width="1" height="14" fill="#111" opacity=".6"/><rect x="520.1" y="96.1" width="14" height="1" fill="#111" opacity=".6"/></svg>
<div class="a t " style="left:425.5px;top:81.56px;font-size:10.5px;font-weight:bold;letter-spacing:0.450px;color:#111;">M</div>
<div class="a t " style="left:474.6px;top:81.56px;font-size:10.5px;font-weight:bold;color:#111;">S</div>
<div class="a t " style="left:522.4px;top:81.56px;font-size:10.5px;font-weight:bold;color:#111;">R</div>
<div class="a t il" style="left:409.7px;top:97.57px;font-size:9.6px;transform:scaleX(1.006);transform-origin:0 0;color:#e0e0e0;-webkit-text-stroke:.3px #e0e0e0;">Move</div>
<div class="a t il" style="left:457.9px;top:97.57px;font-size:9.6px;transform:scaleX(0.933);transform-origin:0 0;color:#e0e0e0;-webkit-text-stroke:.3px #e0e0e0;">Scale</div>
<div class="a t il" style="left:505.8px;top:97.57px;font-size:9.6px;transform:scaleX(1.008);transform-origin:0 0;color:#e0e0e0;-webkit-text-stroke:.3px #e0e0e0;">Rotate</div>
<svg style="left:546px;top:73px" width="45" height="46" viewBox="546 73 45 46" ><g fill="none" stroke="#5a3917" stroke-width="1.1"><circle cx="568.2" cy="95.9" r="11.3"/>
<path d="M568.6 85 Q578 92 577.6 102 Q568 105.5 560 102.5 Q561 91 568.6 85 Z"/></g></svg>
<svg style="left:593px;top:73px" width="46" height="46" viewBox="593 73 46 46" ><defs><linearGradient id="sA" x1="0" x2="1" y1="0" y2="1"><stop offset="0" stop-color="#4a4a4a"/><stop offset="1" stop-color="#181818"/></linearGradient>
<linearGradient id="sB" x1="0" x2="1" y1="0" y2="1"><stop offset="0" stop-color="#d6d6d6"/><stop offset="1" stop-color="#b0b0b0"/></linearGradient><clipPath id="sC"><circle cx="616.1" cy="96.2" r="13.6"/></clipPath></defs>
<circle cx="617" cy="97.2" r="14.6" fill="#111" opacity=".5"/>
<circle cx="616.1" cy="96.2" r="14" fill="url(#sA)" stroke="#dcdcdc" stroke-width="1.4"/>
<path clip-path="url(#sC)" d="M611.5 83.7 C608 88 607.5 91 608.8 96.2 C610 100.5 611.5 103.5 609.9 107 L612 112 L620.2 108.4 C624.5 104.5 626.5 101 625.3 96.5 C624 92 620 90.5 619.4 86 L620.2 84.8 L616 80 Z" fill="url(#sB)"/></svg>
<svg style="left:1025px;top:73px" width="46" height="46" viewBox="1025 73 46 46" ><g fill="none"><path d="M1054.3000000000002 90.4 A11.4 11.4 0 1 0 1053.9 105.1" stroke="#c4c4c4" stroke-width="1.1"/>
<circle cx="1045.4" cy="97.5" r="5.4" stroke="#8e8e8e" stroke-width="1"/><path d="M1043.2 97.5 H1047.6000000000001 M1045.4 95.3 V99.7" stroke="#d0d0d0" stroke-width="1"/></g>
<path d="M1054.2 96.6 C1055.9 94.5 1055.6000000000001 91 1058.8000000000002 89.6 C1060.8000000000002 89.2 1061.6000000000001 90.4 1060.8000000000002 92.6 C1059.8000000000002 95.4 1057.0 96.8 1054.2 96.6 Z" fill="#c8c8c8"/>
<path d="M1059.8000000000002 88.6 C1060.6000000000001 86.4 1061.8000000000002 84.8 1063.2 83.6 C1063.6000000000001 86 1063.2 88.2 1062.3000000000002 90 Z" fill="#c8c8c8"/></svg>
<div class="a t il" style="left:1053.9px;top:97.19px;font-size:11px;font-weight:bold;color:#e0e0e0;">S</div>
<svg style="left:1265px;top:73px" width="46" height="46" viewBox="1265 73 46 46" ><g fill="none"><path d="M1294.2 90.4 A11.4 11.4 0 1 0 1293.8 105.1" stroke="#c4c4c4" stroke-width="1.1"/>
<circle cx="1285.3" cy="97.5" r="5.4" stroke="#8e8e8e" stroke-width="1"/><path d="M1283.1 97.5 H1287.5 M1285.3 95.3 V99.7" stroke="#d0d0d0" stroke-width="1"/></g>
<path d="M1294.1 96.6 C1295.8 94.5 1295.5 91 1298.7 89.6 C1300.7 89.2 1301.5 90.4 1300.7 92.6 C1299.7 95.4 1296.8999999999999 96.8 1294.1 96.6 Z" fill="#c8c8c8"/>
<path d="M1299.7 88.6 C1300.5 86.4 1301.7 84.8 1303.1 83.6 C1303.5 86 1303.1 88.2 1302.2 90 Z" fill="#c8c8c8"/></svg>
<div class="a t il" style="left:1293.6px;top:97.19px;font-size:11px;font-weight:bold;color:#e0e0e0;">D</div>
<svg width="0" height="0" style="left:0;top:0"><defs><filter id="ds" x="-20%" y="-20%" width="150%" height="150%"><feDropShadow dx="1" dy="1" stdDeviation="0.4" flood-color="#000" flood-opacity=".7"/></filter><radialGradient id="sph" cx=".35" cy=".3" r=".75"><stop offset="0" stop-color="#a8a8a8"/><stop offset=".5" stop-color="#6a6a6a"/><stop offset="1" stop-color="#2c2c2c"/></radialGradient><radialGradient id="lens" cx=".4" cy=".35" r=".7"><stop offset="0" stop-color="#5e5e5e"/><stop offset="1" stop-color="#2a2a2a"/></radialGradient></defs></svg>
<svg style="left:1607px;top:127px" width="46" height="46" viewBox="1607 127 46 46" ><defs><linearGradient id="bp" x1="0" x2="1" y1="0" y2="1"><stop offset="0" stop-color="#6e6e6e"/><stop offset="1" stop-color="#3c3c3c"/></linearGradient>
<radialGradient id="bs2" cx=".32" cy=".3" r=".75"><stop offset="0" stop-color="#b2b2b2"/><stop offset=".55" stop-color="#7c7c7c"/><stop offset="1" stop-color="#505050"/></radialGradient><clipPath id="bpc"><rect x="1615" y="135" width="30" height="30"/></clipPath></defs>
<rect x="1615" y="135" width="30" height="30" fill="url(#bp)"/><g clip-path="url(#bpc)"><circle cx="1632" cy="151.5" r="13" fill="#3a3a3a" opacity=".75"/><circle cx="1625.6" cy="145.6" r="10.6" fill="url(#bs2)"/></g></svg>
<div class="a t " style="left:1620.1px;top:153.26px;font-size:8.2px;font-weight:bold;letter-spacing:0.452px;color:#e4e4e4;text-shadow:0 1px 1px #222;">BPR</div>
<svg style="left:1607px;top:200px" width="46" height="45" viewBox="1607 200 46 45" ><rect x="1628.0" y="209.6" width="14.200000000000045" height="12.800000000000011" fill="#5a5a5a" stroke="#b8b8b8" stroke-width="1" filter="url(#ds)"/><g stroke="#c8c8c8" stroke-width="1" fill="#c8c8c8"><path d="M1635.5 211.5 V220.5 M1631 216 H1640"/><path d="M1635.5 210.6 l-1.6 2 h3.2 Z M1635.5 221.4 l-1.6 -2 h3.2 Z M1630.1 216 l2 -1.6 v3.2 Z M1640.9 216 l-2 -1.6 v3.2 Z" stroke="none"/></g><g transform="translate(1616.6 209.8)" fill="#d4d4d4" filter="url(#ds)">
<rect x="3.2" y="1.6" width="2" height="7" rx="1"/><rect x="5.9" y="0" width="2.1" height="8" rx="1"/><rect x="8.7" y="0.6" width="2.1" height="8" rx="1"/><rect x="11.4" y="2.6" width="1.9" height="7" rx=".9"/>
<path d="M3.2 6.5 H13.3 V10 C13.3 12.5 12 13.5 11.5 15 H5.5 C5 13.2 3.6 12.2 3.2 10 Z"/>
<path d="M0.2 7.6 C0.9 6.6 2 6.8 2.6 7.6 L5 11 L3.6 12.4 Z"/></g></svg>
<div class="a t il" style="left:1616.8px;top:223.57px;font-size:9.6px;transform:scaleX(1.033);transform-origin:0 0;color:#e0e0e0;-webkit-text-stroke:.3px #e0e0e0;">Scroll</div>
<svg style="left:1607px;top:248px" width="46" height="45" viewBox="1607 248 46 45" ><rect x="1628.0" y="258.7" width="14.200000000000045" height="12.699999999999989" fill="#5a5a5a" stroke="#b8b8b8" stroke-width="1" filter="url(#ds)"/><g fill="#d0d0d0"><rect x="1637" y="262" width="1.4" height="6.5"/><path d="M1637.7 259.8 l-2.7 3 h5.4 Z M1637.7 270.6 l-2.7 -3 h5.4 Z"/></g><g filter="url(#ds)"><path d="M1623.5 266.7 L1616.6000000000001 273.1" stroke="#dcdcdc" stroke-width="2.1" stroke-linecap="round"/>
<circle cx="1627.2" cy="262.5" r="5.1" fill="url(#lens)" stroke="#e0e0e0" stroke-width="1"/></g><circle cx="1629.8" cy="263.5" r=".6" fill="#ddd"/><path d="M1624.2 261.0 A3.4 3.4 0 0 1 1626.2 259.3" stroke="#999" stroke-width=".7" fill="none"/></svg>
<div class="a t il" style="left:1617.7px;top:271.57px;font-size:9.6px;transform:scaleX(0.925);transform-origin:0 0;color:#e0e0e0;-webkit-text-stroke:.3px #e0e0e0;">Zoom</div>
<svg style="left:1607px;top:296px" width="46" height="45" viewBox="1607 296 46 45" ><rect x="1628.9" y="306.4" width="14.5" height="12.700000000000045" fill="#5a5a5a" stroke="#b8b8b8" stroke-width="1" filter="url(#ds)"/><g filter="url(#ds)"><path d="M1624.7 314.7 L1617.8000000000002 321.1" stroke="#dcdcdc" stroke-width="2.1" stroke-linecap="round"/>
<circle cx="1628.4" cy="310.5" r="5.1" fill="url(#lens)" stroke="#e0e0e0" stroke-width="1"/></g><circle cx="1631.0" cy="311.5" r=".6" fill="#ddd"/><path d="M1625.4 309.0 A3.4 3.4 0 0 1 1627.4 307.3" stroke="#999" stroke-width=".7" fill="none"/></svg>
<div class="a t " style="left:1633.3px;top:306.91px;font-size:9.5px;letter-spacing:-1.047px;color:#d4d4d4;">x1</div>
<div class="a t il" style="left:1616.8px;top:319.37px;font-size:9.6px;transform:scaleX(0.990);transform-origin:0 0;color:#e0e0e0;-webkit-text-stroke:.3px #e0e0e0;">Actual</div>
<svg style="left:1607px;top:344px" width="46" height="45" viewBox="1607 344 46 45" ><rect x="1628.9" y="354.7" width="14.5" height="12.699999999999989" fill="#5a5a5a" stroke="#b8b8b8" stroke-width="1" filter="url(#ds)"/><rect x="1635.3" y="355.2" width="7.6" height="6" fill="#a0a0a0"/><g filter="url(#ds)"><path d="M1623.5 362.7 L1616.6000000000001 369.1" stroke="#dcdcdc" stroke-width="2.1" stroke-linecap="round"/>
<circle cx="1627.2" cy="358.5" r="5.1" fill="url(#lens)" stroke="#e0e0e0" stroke-width="1"/></g><circle cx="1629.8" cy="359.5" r=".6" fill="#ddd"/><path d="M1624.2 357.0 A3.4 3.4 0 0 1 1626.2 355.3" stroke="#999" stroke-width=".7" fill="none"/></svg>
<div class="a t il" style="left:1615.9px;top:367.57px;font-size:9.6px;transform:scaleX(0.961);transform-origin:0 0;color:#e0e0e0;-webkit-text-stroke:.3px #e0e0e0;">AAHalf</div>
<svg style="left:1607px;top:392px" width="46" height="45" viewBox="1607 392 46 45" ><polygon points="1622,402 1638,402 1645,411.5 1615,411.5" fill="#f08a20" opacity=".0"/><rect x="1615" y="411.5" width="30" height="3.8" fill="#d67a1c"/>
<g stroke="#161616" stroke-width="1" fill="none"><path d="M1615 401.9 H1645 M1615 404.4 H1645 M1615 407.2 H1645 M1615 411.4 H1645 M1615 415.4 H1645"/><path d="M1629.9 402 V415.4"/><path d="M1622.5 402 L1615 411.4 M1637.5 402 L1645 411.4" stroke-width="1.2"/></g></svg>
<div class="a t " style="left:1614px;top:387.97px;font-size:7.6px;font-weight:bold;transform:scaleX(1.147);transform-origin:0 0;color:#fff;">Dynamic</div>
<div class="a t " style="left:1617.7px;top:413.57px;font-size:9.6px;transform:scaleX(0.890);transform-origin:0 0;color:#161616;-webkit-text-stroke:.3px #161616;">Persp</div>
<div class="a t " style="left:1627.8px;top:435.75px;font-size:6.5px;font-weight:bold;color:#505050;">X</div>
<div class="a t " style="left:1637.2px;top:435.75px;font-size:6.5px;font-weight:bold;color:#f0f0f0;">Y</div>
<div class="a t " style="left:1645.8px;top:435.75px;font-size:6.5px;font-weight:bold;color:#505050;">Z</div>
<svg style="left:1607px;top:440px" width="46" height="45" viewBox="1607 440 46 45" ><g fill="#d6d6d6" filter="url(#ds)"><rect x="1615" y="463" width="30" height="2.6"/><rect x="1628.6" y="456.3" width="2.6" height="4"/><path d="M1625.4 459.6 H1634.4 L1629.9 463.8 Z"/></g></svg>
<div class="a t il" style="left:1618.7px;top:463.57px;font-size:9.6px;transform:scaleX(0.929);transform-origin:0 0;color:#e0e0e0;-webkit-text-stroke:.3px #e0e0e0;">Floor</div>
<svg style="left:1607px;top:488px" width="46" height="45" viewBox="1607 488 46 45" ><g filter="url(#ds)"><path d="M1615 512.5 H1645" stroke="#cfcfcf" stroke-width="1"/><path d="M1629.5 504.8 V510 M1629.5 515 V517" stroke="#cfcfcf" stroke-width="1"/>
<rect x="1628.2" y="511.2" width="2.6" height="2.6" fill="#2a2a2a" stroke="#e0e0e0" stroke-width=".9"/>
<path d="M1616.8 508.5 l3.6 -3.2 v2 h3.8 v2.4 h-3.8 v2 Z M1642.3 508.5 l-3.6 -3.2 v2 h-3.8 v2.4 h3.8 v2 Z" fill="#d6d6d6"/></g></svg>
<div class="a t il" style="left:1616.8px;top:511.37px;font-size:9.6px;transform:scaleX(0.970);transform-origin:0 0;color:#e0e0e0;-webkit-text-stroke:.3px #e0e0e0;">L.Sym</div>
<svg style="left:1607px;top:536px" width="46" height="45" viewBox="1607 536 46 45" ><g fill="none" stroke="#8a8a8a" stroke-width="1.2"><circle cx="1624.7" cy="558" r="4.2"/></g>
<g fill="#808080"><rect x="1622.8" y="562.4" width="13" height="7" rx="1"/><path d="M1617.3 563.4 L1622.4 564.6 V567.2 L1617.3 568.4 Z"/><rect x="1636.2" y="563" width="2" height="3.4"/><rect x="1624.5" y="564.8" width="9.5" height="1" fill="#555"/><rect x="1624.5" y="567" width="9.5" height="1" fill="#555"/></g>
<path d="M1632.6 554 V550 A3.6 3.6 0 0 1 1639.8 550 V554" fill="none" stroke="#d6d6d6" stroke-width="2"/>
<rect x="1629.8" y="553.9" width="12.6" height="7.6" rx="1.2" fill="#b4b4b4"/></svg>
<div class="a t " style="left:1634px;top:550.35px;font-size:6.5px;font-weight:bold;color:#444;">C</div>
<svg style="left:1607px;top:584px" width="46" height="21" viewBox="1607 584 46 21" ><path d="M1627.1 591.4 A4.6 4.6 0 1 0 1621.6 597.4" fill="none" stroke="#1a1a1a" stroke-width="1"/><path d="M1620.3999999999999 595 L1624.2 597.2 L1620.3999999999999 599.4 L1621.6 597.2 Z" fill="#1a1a1a"/></svg>
<div class="a t " style="left:1624.5px;top:588.42px;font-size:8.6px;letter-spacing:-0.259px;color:#1a1a1a;">XYZ</div>
<svg style="left:1620px;top:608px" width="30" height="44" viewBox="1620 608 30 44" ><g filter="url(#ds)"><path d="M1633.0 615.0 A4.6 4.6 0 1 0 1627.5 621.0" fill="none" stroke="#dcdcdc" stroke-width="1"/><path d="M1626.3 618.6 L1630.1000000000001 620.8000000000001 L1626.3 623.0 L1627.5 620.8000000000001 Z" fill="#dcdcdc"/><path d="M1639.0 638.1999999999999 A4.6 4.6 0 1 0 1633.5 644.1999999999999" fill="none" stroke="#dcdcdc" stroke-width="1"/><path d="M1632.3 641.8 L1636.1000000000001 644.0 L1632.3 646.1999999999999 L1633.5 644.0 Z" fill="#dcdcdc"/></g></svg>
<div class="a t il" style="left:1630.4px;top:612.32px;font-size:8.6px;color:#e0e0e0;">Y</div>
<div class="a t il" style="left:1636.3px;top:635.46px;font-size:8.2px;color:#e0e0e0;">Z</div>
<svg style="left:1607px;top:656px" width="46" height="45" viewBox="1607 656 46 45" ><circle cx="1630.2" cy="673.5" r="3.9" fill="url(#sph)" opacity="1"/><g filter="url(#ds)"><path d="M1624.6 671.8000000000001 L1620 667.2" stroke="#e4e4e4" stroke-width="1.1"/><path d="M1620 667.2 L1623.4 667.2 L1620 670.6 Z" fill="#e4e4e4"/><path d="M1635.4 671.8000000000001 L1640 667.2" stroke="#e4e4e4" stroke-width="1.1"/><path d="M1640 667.2 L1636.6 667.2 L1640 670.6 Z" fill="#e4e4e4"/><path d="M1624.6 675.1999999999999 L1620 679.8" stroke="#e4e4e4" stroke-width="1.1"/><path d="M1620 679.8 L1623.4 679.8 L1620 676.4 Z" fill="#e4e4e4"/><path d="M1635.4 675.1999999999999 L1640 679.8" stroke="#e4e4e4" stroke-width="1.1"/><path d="M1640 679.8 L1636.6 679.8 L1640 676.4 Z" fill="#e4e4e4"/></g></svg>
<div class="a t il" style="left:1616.8px;top:679.37px;font-size:9.6px;transform:scaleX(0.996);transform-origin:0 0;color:#e0e0e0;-webkit-text-stroke:.3px #e0e0e0;">Frame</div>
<svg style="left:1607px;top:704px" width="46" height="45" viewBox="1607 704 46 45" ><circle cx="1633.9" cy="720" r="7" fill="url(#sph)" opacity="1"/><rect x="1632.4" y="718.5" width="4" height="4" fill="#333" stroke="#dcdcdc" stroke-width="1"/><rect x="1633.8000000000002" y="719.9" width="1.2" height="1.2" fill="#bbb"/><g transform="translate(1615.6 715.8)" fill="#d4d4d4" filter="url(#ds)">
<rect x="3.2" y="1.6" width="2" height="7" rx="1"/><rect x="5.9" y="0" width="2.1" height="8" rx="1"/><rect x="8.7" y="0.6" width="2.1" height="8" rx="1"/><rect x="11.4" y="2.6" width="1.9" height="7" rx=".9"/>
<path d="M3.2 6.5 H13.3 V10 C13.3 12.5 12 13.5 11.5 15 H5.5 C5 13.2 3.6 12.2 3.2 10 Z"/>
<path d="M0.2 7.6 C0.9 6.6 2 6.8 2.6 7.6 L5 11 L3.6 12.4 Z"/></g></svg>
<div class="a t il" style="left:1617.9px;top:727.57px;font-size:9.6px;transform:scaleX(1.001);transform-origin:0 0;color:#e0e0e0;-webkit-text-stroke:.3px #e0e0e0;">Move</div>
<svg style="left:1607px;top:752px" width="46" height="45" viewBox="1607 752 46 45" ><circle cx="1635.8" cy="767.4" r="7.5" fill="url(#sph)" opacity="1"/><rect x="1633.5" y="764.3" width="4" height="4" fill="#333" stroke="#dcdcdc" stroke-width="1"/><rect x="1634.9" y="765.6999999999999" width="1.2" height="1.2" fill="#bbb"/><g filter="url(#ds)"><path d="M1623.5 770.7 L1616.6000000000001 777.1" stroke="#dcdcdc" stroke-width="2.1" stroke-linecap="round"/>
<circle cx="1627.2" cy="766.5" r="5.1" fill="url(#lens)" stroke="#e0e0e0" stroke-width="1"/></g><circle cx="1629.8" cy="767.5" r=".6" fill="#ddd"/><path d="M1624.2 765.0 A3.4 3.4 0 0 1 1626.2 763.3" stroke="#999" stroke-width=".7" fill="none"/></svg>
<div class="a t il" style="left:1615px;top:774.47px;font-size:9.6px;transform:scaleX(0.815);transform-origin:0 0;color:#e0e0e0;-webkit-text-stroke:.3px #e0e0e0;">Zoom3D</div>
<svg style="left:1607px;top:800px" width="46" height="45" viewBox="1607 800 46 45" ><circle cx="1628.9" cy="821.1" r="7" fill="url(#sph)" opacity="1"/><rect x="1627.3" y="819.6" width="4" height="4" fill="#333" stroke="#dcdcdc" stroke-width="1"/><rect x="1628.7" y="821.0" width="1.2" height="1.2" fill="#bbb"/><g fill="none" stroke="#dedede" stroke-width="1.8" filter="url(#ds)"><path d="M1623 816.5 C1623.5 811 1630.5 809 1633.6 814.6"/><path d="M1637.8 819 C1644.5 820.5 1644 829.5 1634.5 829.2"/></g>
<g fill="#dedede"><path d="M1631 815.8 L1636.6 812 L1635.4 817.8 Z"/><path d="M1640.6 816.4 L1634.6 819.4 L1639.6 823.4 Z"/></g></svg>
<div class="a t il" style="left:1615.9px;top:823.27px;font-size:9.6px;transform:scaleX(0.997);transform-origin:0 0;color:#e0e0e0;-webkit-text-stroke:.3px #e0e0e0;">Rotate</div>
<svg style="left:1607px;top:848px" width="46" height="45" viewBox="1607 848 46 45" ><rect x="1618.7" y="858.6" width="23.7" height="15.5" fill="#222"/><path d="M1620.72 858.6 V874.1" stroke="#777" stroke-width=".6"/><path d="M1622.74 858.6 V874.1" stroke="#777" stroke-width=".6"/><path d="M1624.76 858.6 V874.1" stroke="#777" stroke-width=".6"/><path d="M1626.78 858.6 V874.1" stroke="#777" stroke-width=".6"/><path d="M1628.80 858.6 V874.1" stroke="#777" stroke-width=".6"/><path d="M1630.82 858.6 V874.1" stroke="#777" stroke-width=".6"/><path d="M1632.84 858.6 V874.1" stroke="#777" stroke-width=".6"/><path d="M1634.86 858.6 V874.1" stroke="#777" stroke-width=".6"/><path d="M1636.88 858.6 V874.1" stroke="#777" stroke-width=".6"/><path d="M1638.90 858.6 V874.1" stroke="#777" stroke-width=".6"/><path d="M1640.92 858.6 V874.1" stroke="#777" stroke-width=".6"/><path d="M1618.7 860.80 H1642.4" stroke="#777" stroke-width=".6"/><path d="M1618.7 863.00 H1642.4" stroke="#777" stroke-width=".6"/><path d="M1618.7 865.20 H1642.4" stroke="#777" stroke-width=".6"/><path d="M1618.7 867.40 H1642.4" stroke="#777" stroke-width=".6"/><path d="M1618.7 869.60 H1642.4" stroke="#777" stroke-width=".6"/><path d="M1618.7 871.80 H1642.4" stroke="#777" stroke-width=".6"/><g filter="url(#ds)"><rect x="1618.7" y="858.6" width="23.7" height="15.5" fill="none" stroke="#e0e0e0" stroke-width="1"/><path d="M1630.5 858.6 V874.1 M1618.7 866.3 H1642.4" stroke="#e0e0e0" stroke-width="1"/></g></svg>
<div class="a t " style="left:1610.3px;top:845.27px;font-size:7.6px;font-weight:bold;transform:scaleX(1.324);transform-origin:0 0;color:#cccccc;">Line Fill</div>
<div class="a t il" style="left:1618.7px;top:871.37px;font-size:9.6px;transform:scaleX(0.885);transform-origin:0 0;color:#e0e0e0;-webkit-text-stroke:.3px #e0e0e0;">PolyF</div>
<svg style="left:1607px;top:896px" width="46" height="45" viewBox="1607 896 46 45" ><defs><radialGradient id="tsp" cx=".35" cy=".35" r=".7"><stop offset="0" stop-color="#9a9a9a"/><stop offset=".6" stop-color="#555"/><stop offset="1" stop-color="#2a2a2a" stop-opacity="0"/></radialGradient></defs><circle cx="1628.4" cy="917.1" r="8" fill="url(#tsp)"/><rect x="1626.8" y="905.6" width="14.8" height="12.6" fill="#444" fill-opacity=".45" stroke="#9a9a9a" stroke-width="1"/></svg>
<div class="a t il" style="left:1616.4px;top:919.57px;font-size:9.6px;transform:scaleX(0.878);transform-origin:0 0;color:#e0e0e0;-webkit-text-stroke:.3px #e0e0e0;">Transp</div>
<svg style="left:1607px;top:944px" width="46" height="45" viewBox="1607 944 46 45" ><defs><linearGradient id="gh" x1="0" x2="1"><stop offset="0" stop-color="#55361a"/><stop offset=".55" stop-color="#6a4522" stop-opacity=".4"/><stop offset="1" stop-color="#7b5228" stop-opacity="0"/></linearGradient></defs><circle cx="1629.5" cy="963.1" r="7.8" fill="url(#gh)" stroke="#5a3a1a" stroke-width="1"/><path d="M1622 971 L1639 954.5" stroke="#5a3a1a" stroke-width="1.5"/></svg>
<div class="a t " style="left:1616.9px;top:967.57px;font-size:9.6px;transform:scaleX(0.898);transform-origin:0 0;color:#553616;-webkit-text-stroke:.3px #553616;">Ghost</div>
<svg style="left:1607px;top:992px" width="46" height="45" viewBox="1607 992 46 45" ><g filter="url(#ds)"><circle cx="1622.1" cy="1014.2" r="5.3" fill="#5e5e5e"/><circle cx="1636.7" cy="1014.2" r="5.3" fill="#5e5e5e"/><circle cx="1629.9" cy="1010" r="6.1" fill="#cecece"/></g></svg>
<div class="a t " style="left:1613.9px;top:987.97px;font-size:7.6px;font-weight:bold;transform:scaleX(1.147);transform-origin:0 0;color:#757575;">Dynamic</div>
<div class="a t il" style="left:1620.8px;top:1017.47px;font-size:9.6px;transform:scaleX(0.875);transform-origin:0 0;color:#e0e0e0;-webkit-text-stroke:.3px #e0e0e0;">Solo</div>
<svg style="left:1607px;top:1040px" width="46" height="40" viewBox="1607 1040 46 40" ><g filter="url(#ds)"><rect x="1629.1" y="1057.2" width="1.7" height="1.7" fill="#eee"/><path d="M1624 1058 L1616 1058" stroke="#cfcfcf" stroke-width="1"/><path d="M1616 1058 L1619.4 1060.6 L1619.4 1055.4 Z" fill="#e4e4e4"/><path d="M1636 1058 L1644 1058" stroke="#cfcfcf" stroke-width="1"/><path d="M1644 1058 L1640.6 1055.4 L1640.6 1060.6 Z" fill="#e4e4e4"/><path d="M1625.6 1055 L1619.6 1049" stroke="#cfcfcf" stroke-width="1"/><path d="M1619.6 1049 L1623.1999999999998 1049 L1619.6 1052.6 Z" fill="#e4e4e4"/><path d="M1634.4 1055 L1640.4 1049" stroke="#cfcfcf" stroke-width="1"/><path d="M1640.4 1049 L1636.8000000000002 1049 L1640.4 1052.6 Z" fill="#e4e4e4"/><path d="M1625.6 1061 L1619.6 1067" stroke="#cfcfcf" stroke-width="1"/><path d="M1619.6 1067 L1623.1999999999998 1067 L1619.6 1063.4 Z" fill="#e4e4e4"/><path d="M1634.4 1061 L1640.4 1067" stroke="#cfcfcf" stroke-width="1"/><path d="M1640.4 1067 L1636.8000000000002 1067 L1640.4 1063.4 Z" fill="#e4e4e4"/></g></svg>
<div class="a t il" style="left:1616.9px;top:1063.47px;font-size:9.6px;transform:scaleX(0.919);transform-origin:0 0;color:#e0e0e0;-webkit-text-stroke:.3px #e0e0e0;">Xpose</div></div></body></html>
